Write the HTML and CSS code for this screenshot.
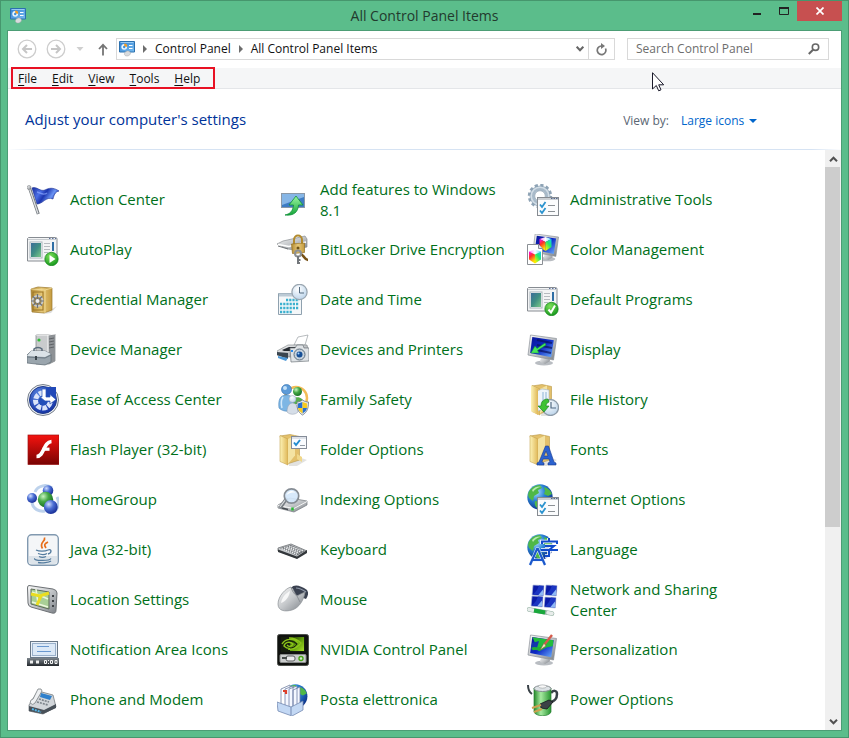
FILE: index.html
```html
<!DOCTYPE html>
<html lang="en">
<head>
<meta charset="utf-8">
<title>All Control Panel Items</title>
<link rel="stylesheet" href="styles.css">
</head>
<body>
<svg class="defs" width="0" height="0" aria-hidden="true">
<defs>
<linearGradient id="flag" x2="1" y2=".4"><stop offset="0" stop-color="#1b2f9c"/><stop offset=".35" stop-color="#4a6ee6"/><stop offset=".55" stop-color="#1c36b0"/><stop offset=".8" stop-color="#6b94f4"/><stop offset="1" stop-color="#2443b8"/></linearGradient>
<linearGradient id="metal" x2="1" y2="1"><stop offset="0" stop-color="#fafafa"/><stop offset=".5" stop-color="#c4c7ca"/><stop offset="1" stop-color="#7b8086"/></linearGradient>
<linearGradient id="dark" x2="0" y2="1"><stop offset="0" stop-color="#7d858c"/><stop offset="1" stop-color="#25292e"/></linearGradient>
<linearGradient id="gold" x2="1"><stop offset="0" stop-color="#b48c35"/><stop offset=".5" stop-color="#e6c878"/><stop offset="1" stop-color="#c59b3f"/></linearGradient>
<linearGradient id="paper" x2="1"><stop offset="0" stop-color="#fdf3b6"/><stop offset="1" stop-color="#dfb757"/></linearGradient>
<linearGradient id="screen" x2="1" y2="1"><stop offset="0" stop-color="#0a1697"/><stop offset=".5" stop-color="#0c28c4"/><stop offset="1" stop-color="#6fb4ff"/></linearGradient>
<linearGradient id="photo" x2="1" y2="1"><stop offset="0" stop-color="#3b6c99"/><stop offset=".5" stop-color="#3f8e83"/><stop offset="1" stop-color="#7cc988"/></linearGradient>
<linearGradient id="panel" x2="1" y2="1"><stop offset="0" stop-color="#2f7fd2"/><stop offset="1" stop-color="#79bdf0"/></linearGradient>
<linearGradient id="red" x2="0" y2="1"><stop offset="0" stop-color="#f5130f"/><stop offset="1" stop-color="#780303"/></linearGradient>
<linearGradient id="battery" x2="1"><stop offset="0" stop-color="#268a2b"/><stop offset=".4" stop-color="#a7eaa0"/><stop offset="1" stop-color="#279430"/></linearGradient>
<linearGradient id="warm" x2=".4" y2="1"><stop offset="0" stop-color="#f0f"/><stop offset=".45" stop-color="#ff3028"/><stop offset="1" stop-color="#ffe600"/></linearGradient>
<linearGradient id="cool" x1="1" x2=".3" y2="1"><stop offset="0" stop-color="#12c4ff"/><stop offset=".5" stop-color="#23e96b"/><stop offset="1" stop-color="#f2f500"/></linearGradient>
<linearGradient id="lid" x2="1"><stop offset="0" stop-color="#ff7bff"/><stop offset=".5" stop-color="#fff"/><stop offset="1" stop-color="#5fdcff"/></linearGradient>
<linearGradient id="nv" x2="1" y2="1"><stop offset="0" stop-color="#1d2b07"/><stop offset=".5" stop-color="#5f9c0a"/><stop offset="1" stop-color="#a8e02a"/></linearGradient>
<linearGradient id="arrow" x2="0" y2="1"><stop offset="0" stop-color="#9bf7a2"/><stop offset="1" stop-color="#15a539"/></linearGradient>
<radialGradient id="ballBlue" cx=".35" cy=".3" r=".75"><stop offset="0" stop-color="#d0defd"/><stop offset=".45" stop-color="#4b6fd4"/><stop offset="1" stop-color="#142a93"/></radialGradient>
<radialGradient id="ballGreen" cx=".35" cy=".3" r=".75"><stop offset="0" stop-color="#c9f5c0"/><stop offset=".45" stop-color="#45a846"/><stop offset="1" stop-color="#146b20"/></radialGradient>
<radialGradient id="globe" cx=".35" cy=".3" r=".75"><stop offset="0" stop-color="#b5e3ff"/><stop offset=".45" stop-color="#2b84d6"/><stop offset="1" stop-color="#0b2f86"/></radialGradient>
<radialGradient id="badge" cx=".4" cy=".3" r=".75"><stop offset="0" stop-color="#7de05a"/><stop offset="1" stop-color="#12941a"/></radialGradient>
<radialGradient id="glass" cx=".4" cy=".3" r=".8"><stop offset="0" stop-color="#fff"/><stop offset="1" stop-color="#b4cfe8"/></radialGradient>
<radialGradient id="ease" cx=".4" cy=".3" r=".8"><stop offset="0" stop-color="#5a87e0"/><stop offset="1" stop-color="#0d2aa0"/></radialGradient>
<g id="app">
<path d="M1.500 3.500h27a1.500 1.500 0 0 1 1.500 1.500v22H.5V4.500z" fill="#f3f4f5" stroke="#878c92"/>
<path d="M1 5.500h28.500" stroke="#c8ccd0"/><path d="M22 4.500h1.500m1.500 0h1.500m1.500 0H29" stroke="#5b6f9a"/>
<rect x="3" y="8" width="12" height="16" fill="#fff" stroke="#a9b4bb"/><rect x="4" y="9" width="10" height="14" fill="url(#photo)"/>
<path d="M17 9.500h6m-6 3h6m-6 3h6m-6 3h4" stroke="#b6babf"/><path d="M26 8v9" stroke="#2f6ea5" stroke-width="2"/>
</g>
<g id="checks">
<rect x="10.500" y="13.500" width="21" height="18" fill="#fbfcfd" stroke="#868b91"/>
<path d="M11 15h20" stroke="#ccd0d4" stroke-width="2"/><path d="M24 14.500h1.500m1 0H28m1 0h1.500" stroke="#56698c"/>
<path d="M13 20.500l2 2.500 3.500-5M13 26.500l2 2.500 3.500-5" fill="none" stroke="#2b93cf" stroke-width="1.800"/><path d="M21 21.500h7m-7 6h7" stroke="#8b9095"/>
</g>
<g id="folder">
<path d="M13 20l17 6-10 6h-8z" fill="#d5d5d3" opacity=".7"/>
<path d="M3 2l10-1.500 9.500 2V26L10 30z" fill="#e3c06b" stroke="#b99741" stroke-width=".6"/>
<path d="M3 1.500L11 5v26l-8-3.500z" fill="url(#paper)" stroke="#c6a550" stroke-width=".6"/>
<path d="M11 5l7-3.500v20L11 30z" fill="#f4e3a2"/>
</g>
<g id="monitor">
<ellipse cx="17" cy="29" rx="9" ry="2.500" fill="#b9bdc2"/><path d="M14 23l8-1 1 5-5 3-5-2z" fill="url(#metal)"/>
<path d="M3.500 1l26 3.500-3 21.500L1 21z" fill="url(#metal)" stroke="#8b9198" stroke-width=".7"/>
<path d="M5.300 3l21.500 3.200-2.600 17L3.200 19z" fill="url(#screen)"/>
</g>
<g id="cube">
<path d="M0 2l6-2 6 2-6 3z" fill="url(#lid)"/><path d="M0 2l6 3v9L0 10z" fill="url(#warm)"/><path d="M12 2L6 5v9l6-4z" fill="url(#cool)"/>
</g>
<g id="world">
<circle cx="13" cy="13" r="12.700" fill="url(#globe)"/>
<path d="M3 6c3-4 7-5 10-5l2 3-4 2 1 3-5 3-1 5-4-3C.5 11 1 8 3 6zM17 3c4 1 7 4 8 7l-4 2-4-2 1-3zM8 17l6 1 2 4-4 3c-3-1-5-4-4-8z" fill="#4fb848"/>
<path d="M5 6c3-4 8-4 10-3-4 0-7 2-9 5z" fill="#e0ffd8" opacity=".7"/>
</g>
<g id="clock"><circle cx="23.500" cy="23.500" r="8" fill="url(#glass)" stroke="#8d9ba8" stroke-width="1.300"/><path d="M24 18v6h5" fill="none" stroke="#506a83" stroke-width="1.200"/></g>
<g id="cpanel">
<path d="M.5.5h15v10.500H.5z" fill="url(#panel)" stroke="#2c70ae"/><path d="M1.500 1.500h13" stroke="#a9d8fa" stroke-width=".8"/>
<circle cx="5.200" cy="5.800" r="2.900" fill="#e9f5ff"/><path d="M5.200 5.800V2.600a3 3 0 0 1 3 3.200z" fill="#f19b23"/><circle cx="5.200" cy="6" r="1.200" fill="#3f90d8"/>
<path d="M10 4.500h3.500M10 7.500h3.500" stroke="#fff" stroke-width="1.200"/>
<path d="M6 11.500c1-2 4-2 5-.5 1.500 2-1 4-3 4s-3.500-1.500-2-3.500z" fill="#d9dbdd" stroke="#a0a4a8" stroke-width=".5"/>
</g>
<g id="tile"><path d="M1 0l11 .5-.7 10.500L0 10z" fill="#0a1aa6" stroke="#b6c2dc" stroke-width=".7"/><path d="M1 9.500l4-4.500 2-4.500 4.500.5-.6 9z" fill="#1b35c2"/><path d="M6 10.500l5-6v6z" fill="#8db8f6"/></g>
</defs>
</svg>

<div class="window">
<header class="titlebar">
<svg class="app-icon" width="16" height="16" viewBox="0 0 16 16" aria-hidden="true"><use href="#cpanel"/></svg>
<div class="title">All Control Panel Items</div>
<div class="controls">
<button type="button" class="ctl" aria-label="Minimize"><svg width="10" height="12" viewBox="0 0 10 12"><path d="M1 9h8" stroke="#222" stroke-width="2"/></svg></button>
<button type="button" class="ctl" aria-label="Maximize"><svg width="10" height="12" viewBox="0 0 10 12"><path d="M.5 3v6.500h9V3" fill="none" stroke="#222"/><path d="M0 3h10" stroke="#222" stroke-width="2"/></svg></button>
<button type="button" class="ctl close" aria-label="Close"><svg width="8" height="8" viewBox="0 0 8 8"><path d="M.5.5l7 7m0-7l-7 7" stroke="#fff" stroke-width="1.700"/></svg></button>
</div>
</header>

<div class="client">
<nav class="address-row">
<button type="button" class="nav" aria-label="Back"><svg width="20" height="20" viewBox="0 0 20 20"><circle cx="10" cy="10" r="8.800" fill="none" stroke="#cdcdcd" stroke-width="1.300"/><path d="M15 10H6m4-4l-4 4 4 4" fill="none" stroke="#c6c6c6" stroke-width="2"/></svg></button>
<button type="button" class="nav" aria-label="Forward"><svg width="20" height="20" viewBox="0 0 20 20"><circle cx="10" cy="10" r="8.800" fill="none" stroke="#cdcdcd" stroke-width="1.300"/><path d="M5 10h9m-4-4l4 4-4 4" fill="none" stroke="#c6c6c6" stroke-width="2"/></svg></button>
<button type="button" class="recent" aria-label="Recent locations"><svg width="8" height="4" viewBox="0 0 8 4"><path d="M.5 0h7L4 4z" fill="#cfcfcf"/></svg></button>
<button type="button" class="up" aria-label="Up"><svg width="10" height="13" viewBox="0 0 10 13"><path d="M5 12.500V2M1 6l4-4.200L9 6" fill="none" stroke="#757575" stroke-width="1.800"/></svg></button>
<div class="address">
<svg width="16" height="16" viewBox="0 0 16 16" aria-hidden="true"><use href="#cpanel"/></svg>
<svg class="sep" width="4" height="8" viewBox="0 0 4 8" aria-hidden="true"><path d="M0 0l4 4-4 4z" fill="#6d6d6d"/></svg>
<a href="#">Control Panel</a>
<svg class="sep" width="4" height="8" viewBox="0 0 4 8" aria-hidden="true"><path d="M0 0l4 4-4 4z" fill="#6d6d6d"/></svg>
<a href="#">All Control Panel Items</a>
<button type="button" class="drop" aria-label="Previous locations"><svg width="8" height="6" viewBox="0 0 8 6"><path d="M.7.7L4 4.300 7.300.7" fill="none" stroke="#666" stroke-width="2"/></svg></button>
<button type="button" class="refresh" aria-label="Refresh"><svg width="11" height="13" viewBox="0 0 11 13"><path d="M9.500 5.500A4.300 4.300 0 1 1 5 3" fill="none" stroke="#777" stroke-width="1.700"/><path d="M5 0v6l4-3z" fill="#777"/></svg></button>
</div>
<form class="search">
<input type="search" placeholder="Search Control Panel" aria-label="Search Control Panel">
<button type="button" aria-label="Search"><svg width="12" height="12" viewBox="0 0 12 12"><circle cx="7.500" cy="4.200" r="3.200" fill="none" stroke="#666" stroke-width="1.600"/><path d="M5 6.800L.8 11" stroke="#666" stroke-width="2"/></svg></button>
</form>
</nav>

<div class="menubar">
<ul class="menu">
<li><a href="#"><u>F</u>ile</a></li><li><a href="#"><u>E</u>dit</a></li><li><a href="#"><u>V</u>iew</a></li><li><a href="#"><u>T</u>ools</a></li><li><a href="#"><u>H</u>elp</a></li>
</ul>
</div>

<div class="heading">
<h1>Adjust your computer's settings</h1>
<label for="view">View by:</label>
<span class="pick"><select id="view"><option>Large icons</option><option>Small icons</option><option>Category</option></select><svg width="8" height="4" viewBox="0 0 8 4" aria-hidden="true"><path d="M0 0h8L4 4z" fill="#06c"/></svg></span>
</div>

<div class="body">
<ul class="items">
<li><a href="#"><svg viewBox="0 0 32 32"><path d="M5 4c5-2 8 4 13 2 4-2 8-3 14 1-4 1-5 4-6 8-7-3-10 5-16 5z" fill="url(#flag)" stroke="#142a92" stroke-width=".6"/><path d="M10 8c4 1 6 4 10 1" fill="none" stroke="#8ba8ff" stroke-width="1.300" opacity=".7"/><path d="M2.500 4l8.800 26" stroke="#6f757b" stroke-width="3"/><path d="M2.300 4l8.700 25.500" stroke="#dfe1e4" stroke-width="1.300"/><circle cx="2" cy="3.500" r="2" fill="url(#metal)" stroke="#7d8185" stroke-width=".6"/></svg><span>Action Center</span></a></li>
<li><a href="#"><svg viewBox="0 0 32 32"><rect x="4.500" y="9.500" width="23" height="14" fill="#3d7cc4" stroke="#8b98a6"/><path d="M5 10h22v3L5 21z" fill="#86b6e6"/><path d="M8 31c5-1 8-4 8.500-10H12l7-9 7 9h-4.500C21 28 17 32 8 31z" fill="url(#arrow)" stroke="#12913a" stroke-width=".8"/></svg><span>Add features to Windows 8.1</span></a></li>
<li><a href="#"><svg viewBox="0 0 32 32"><g transform="translate(13 12)"><circle r="8" fill="none" stroke="#a8bac9" stroke-width="5"/><circle r="10.800" fill="none" stroke="#8ea3b5" stroke-width="2.800" stroke-dasharray="3.200 2.450"/><circle r="8.800" fill="none" stroke="#d2dde6" stroke-width="1.600"/><circle r="5.300" fill="#fff" stroke="#7f95a7" stroke-width=".7"/></g><use href="#checks"/></svg><span>Administrative Tools</span></a></li>

<li><a href="#"><svg viewBox="0 0 32 32"><use href="#app"/><circle cx="24.500" cy="25" r="6.700" fill="url(#badge)" stroke="#13851a" stroke-width=".7"/><path d="M22.500 21l6 4-6 4z" fill="#fff"/></svg><span>AutoPlay</span></a></li>
<li><a href="#"><svg viewBox="0 0 32 32"><path d="M0 10l6-3 22-5 2 3v8l-13 3-6-1z" fill="url(#metal)" stroke="#8a8e92" stroke-width=".7"/><path d="M1 10.500l11 2L29 8" fill="none" stroke="#fff" stroke-width="1.500"/><path d="M1 12l10 3" stroke="#6e7276"/><path d="M17 10V6c0-6 8-6 8 0v4" fill="none" stroke="#b28b2f" stroke-width="2"/><path d="M14.500 10l13-1v9.500l-12 1z" fill="url(#gold)" stroke="#94701f" stroke-width=".7"/><circle cx="21" cy="14" r="1.500" fill="#6d5114"/><path d="M23 20c4 0 4 6 8 6" fill="none" stroke="#775115" stroke-width="2.500"/><circle cx="21" cy="19.500" r="3" fill="none" stroke="#8d9195" stroke-width="2"/><path d="M21 22v8m0-4h2.500M21 29h2" stroke="#73777b" stroke-width="2"/></svg><span>BitLocker Drive Encryption</span></a></li>
<li><a href="#"><svg viewBox="0 0 32 32"><use href="#monitor" transform="translate(5 -1) scale(.9)"/><use href="#cube" transform="translate(12.500 3)"/><path d="M.5 10.500h11l4 4v16H.5z" fill="#fff" stroke="#8a8f94"/><path d="M11.500 10.500v4h4" fill="#e0e5e9" stroke="#8a8f94"/><use href="#cube" transform="translate(2 15.500)"/></svg><span>Color Management</span></a></li>

<li><a href="#"><svg viewBox="0 0 32 32"><path d="M20 28l10-6-6 7-8 1z" fill="#ddd"/><path d="M4 5l7-2 14 1v22l-8 3-12-1z" fill="url(#gold)" stroke="#9a772b" stroke-width=".7"/><path d="M4 5l14 1 7-2M18 6v23" stroke="#f4dfa0" stroke-width=".8" fill="none"/><rect x="6" y="8" width="10" height="18" fill="none" stroke="#997323"/><circle cx="10.500" cy="17" r="5" fill="#a98a48" stroke="#c9ccd0" stroke-width="2"/><path d="M10.500 10v14M4 17h13M6 12.500l9 9m0-9l-9 9" stroke="#6d7278" stroke-width="1.200"/><circle cx="10.500" cy="17" r="2" fill="#eee"/></svg><span>Credential Manager</span></a></li>
<li><a href="#"><svg viewBox="0 0 32 32"><path d="M1.500 9.500h23v21h-23z" fill="#f4f7f9" stroke="#8fa1af"/><path d="M2 11h22" stroke="#bccad5" stroke-width="3"/><path d="M9 16h13M3 20h19M3 24h19M3 28h12" stroke="#3bb0cf" stroke-width="2.500" stroke-dasharray="2.200 1"/><circle cx="22.500" cy="8" r="7.600" fill="url(#glass)" stroke="#9ba7b1" stroke-width="1.300"/><path d="M22.500 3v6h4.500" fill="none" stroke="#536a80"/></svg><span>Date and Time</span></a></li>
<li><a href="#"><svg viewBox="0 0 32 32"><use href="#app"/><circle cx="24.500" cy="25" r="6.700" fill="url(#badge)" stroke="#13851a" stroke-width=".7"/><path d="M21.500 25.500l2.500 3 4-7" fill="none" stroke="#fff" stroke-width="2"/></svg><span>Default Programs</span></a></li>

<li><a href="#"><svg viewBox="0 0 32 32"><path d="M9 1l4-1h15v27l-6 3H9z" fill="#c9cbcd" stroke="#797e83" stroke-width=".7"/><path d="M21 1l7-1v27l-6 3z" fill="#8e9296"/><path d="M9 1h12l7-1M21 1v28" fill="none" stroke="#f8f8f8"/><path d="M22 5l5-1m-5 4l5-1m-5 4l5-1m-5 4l5-1" stroke="#5f6367"/><circle cx="12" cy="6" r="1.600" fill="#31ba38"/><path d="M7 18v-3c2-2 6-2 8 0v3" fill="none" stroke="#596b7b" stroke-width="1.500"/><path d="M0 21l4-4h14l6 3v8l-6 3-18-2z" fill="#9aa5ad" stroke="#5f6b74" stroke-width=".7"/><path d="M4 17h14l6 3-6 3-18-1z" fill="#dbe2e7"/><path d="M0 23l18 1 6-3" stroke="#6b7882" fill="none"/><path d="M9 22v4" stroke="#3b444b" stroke-width="2"/></svg><span>Device Manager</span></a></li>
<li><a href="#"><svg viewBox="0 0 32 32"><path d="M17 11l4-8 10-2-3 10z" fill="#fff" stroke="#9a9fa4" stroke-width=".7"/><path d="M0 17l11-6h19l1 4-6 8H12L0 21z" fill="url(#metal)" stroke="#777d82" stroke-width=".6"/><path d="M5 16l7-3h14l-4 4H7z" fill="#252b31"/><path d="M0 18l11 1v6L0 21z" fill="#3b4650"/><path d="M1 22l10 2-2 3-8-3z" fill="#4f99d7"/><path d="M13 14h5l2-3h6l1 3h5v13l-18 1z" fill="#dfe3e6" stroke="#70777d" stroke-width=".7"/><circle cx="22.500" cy="20.500" r="5.500" fill="#c6d2dd" stroke="#60707e"/><circle cx="22.500" cy="20.500" r="3" fill="#164f96"/><circle cx="21.500" cy="19.500" r="1" fill="#a9d5ff"/><path d="M14 17h2" stroke="#288aee" stroke-width="2"/></svg><span>Devices and Printers</span></a></li>
<li><a href="#"><svg viewBox="0 0 32 32"><use href="#monitor"/><path d="M10 6l15 3m-15 2l15 3M10 16l14 3" stroke="#0a135e" stroke-width="2" opacity=".7"/><path d="M18 9l-8 5.500-2-2.500-4 7h8l-1.500-2.500L19 11z" fill="#45e65b" stroke="#159433" stroke-width=".5"/></svg><span>Display</span></a></li>

<li><a href="#"><svg viewBox="0 0 32 32"><circle cx="16" cy="16" r="15.500" fill="#e9edf2" stroke="#777f8b"/><circle cx="16" cy="16" r="13.500" fill="url(#ease)" stroke="#1f3988"/><circle cx="16" cy="16.500" r="7.500" fill="none" stroke="#dbe5fa" stroke-width="5" stroke-dasharray="4.600 1.200" stroke-dashoffset="-2"/><path d="M19 3h10v11H19z" fill="#2149b8"/><circle cx="16" cy="17" r="4.500" fill="#2350b9"/><path d="M15 5h4v8h4v-2.500l6 5-6 4.500v-3h-5l-5-4h2z" fill="#fff" stroke="#2d56b8" stroke-width=".7"/></svg><span>Ease of Access Center</span></a></li>
<li><a href="#"><svg viewBox="0 0 32 32"><circle cx="19" cy="14" r="11" fill="none" stroke="#f3bd57" stroke-width="2.500"/><circle cx="20.500" cy="7.500" r="4.500" fill="url(#ballGreen)"/><path d="M14 20c0-9 13-9 13 0z" fill="#57b04d"/><circle cx="9.500" cy="5.500" r="5" fill="#5c9bd8" stroke="#2d6cae" stroke-width=".6"/><circle cx="8" cy="4" r="2" fill="#c5e2fa"/><path d="M2 24c-1-8 1-13 7.500-13S17 17 16 25c-4 3-10 3-14-1z" fill="#7db6e4" stroke="#4a86bd" stroke-width=".6"/><path d="M6 13c-2 3-2 7-1 11" stroke="#d3e9fa" stroke-width="1.500" fill="none"/><circle cx="15.500" cy="15" r="3.500" fill="url(#glass)" stroke="#97a3b1" stroke-width=".5"/><path d="M10 28c0-12 11-12 11 0-3 3-8 3-11 0z" fill="#d6dee8" stroke="#929fae" stroke-width=".5"/><path d="M20 18c2 0 4-1 5.500-2 2 1.500 4 2 6 2 0 6-1 10-6 13-5-3-5.500-7-5.500-13z" fill="#e8ecef" stroke="#6e7883" stroke-width=".8"/><path d="M25.500 18v6H21v-4.500zm0 6H30c-.5 2.500-2 4-4.500 5.500z" fill="#2870cf"/><path d="M25.500 18l4.700 1.500V24h-4.700zm0 6v5.500C23 28 21.500 26.500 21 24z" fill="#f7cb20"/></svg><span>Family Safety</span></a></li>
<li><a href="#"><svg viewBox="0 0 32 32"><g transform="translate(2 0)"><use href="#folder"/><path d="M8 7l5-2 7 1v17l-11 4z" fill="#eff5fb" stroke="#a5b5c4" stroke-width=".6"/><path d="M14 8v14m3-14v12" stroke="#8db4d6"/><path d="M2 1.500L9 5v26l-7-4z" fill="url(#paper)"/></g><use href="#clock"/><path d="M21 15c-5 0-7 3-7 7h-3l6 6 5-6h-3c0-2 1-3 3-4z" fill="#3fc234" stroke="#16791b" stroke-width=".6"/></svg><span>File History</span></a></li>

<li><a href="#"><svg viewBox="0 0 32 32"><rect x="1" y="1" width="31" height="29.500" fill="url(#red)" stroke="#9b1212" stroke-width=".7"/><path d="M24.500 7.500C16 8 17.500 22.500 9.500 22.500" fill="none" stroke="#fff" stroke-width="3.600"/><path d="M15.500 15.200h7" stroke="#fff" stroke-width="3.200"/></svg><span>Flash Player (32-bit)</span></a></li>
<li><a href="#"><svg viewBox="0 0 32 32"><use href="#folder"/><path d="M20 20l5 3v5l-5-3z" fill="#f0d789"/><rect x="14.500" y="2.500" width="15" height="12" fill="#fafcff" stroke="#858c98"/><path d="M15 4h14" stroke="#c3c8d2"/><path d="M17 8.500l2 2.500 4-5" fill="none" stroke="#218ccf" stroke-width="2"/><path d="M23 11.500h5" stroke="#939ba6"/></svg><span>Folder Options</span></a></li>
<li><a href="#"><svg viewBox="0 0 32 32"><use href="#folder"/><path d="M10 31v-2l2-1 6.500-16h3L27 28l2 1v2h-8v-2l2-1-1-3h-6l-1 3 2 1v2zm7-9h4l-2-5z" fill="#2b62cf" stroke="#18398d" stroke-width=".6" fill-rule="evenodd"/></svg><span>Fonts</span></a></li>

<li><a href="#"><svg viewBox="0 0 32 32"><path d="M8 8c3-7 12-8 17-4M30 13c3 6 1 12-3 15M5 19c1 6 7 9 13 8" fill="none" stroke="#bdd2ec" stroke-width="3"/><circle cx="21" cy="6.500" r="5.300" fill="url(#ballBlue)"/><circle cx="5" cy="14" r="5" fill="url(#ballBlue)"/><circle cx="18.500" cy="15.500" r="7.700" fill="url(#ballGreen)"/><circle cx="23.800" cy="23" r="6.900" fill="url(#ballBlue)"/></svg><span>HomeGroup</span></a></li>
<li><a href="#"><svg viewBox="0 0 32 32"><path d="M1 21l12-7 17 3v4L17 28 1 24z" fill="url(#metal)" stroke="#71777c" stroke-width=".7"/><path d="M1 21.500l16 3 13-7" fill="none" stroke="#f7f7f7"/><path d="M5 24l6 1.500" stroke="#454a4f" stroke-width="1.500"/><path d="M15.500 23.500v3" stroke="#28ba32" stroke-width="2.500"/><path d="M10 14L3 24" stroke="#777d83" stroke-width="3.500"/><path d="M9 15l-6 8" stroke="#dadddf" stroke-width="1.200"/><circle cx="14.500" cy="12" r="7.200" fill="#d3e7fb" fill-opacity=".9" stroke="#858c94" stroke-width="1.700"/><path d="M9.500 11c2-5 7-5 9-2-4-1-6 0-9 2z" fill="#fff"/></svg><span>Indexing Options</span></a></li>
<li><a href="#"><svg viewBox="0 0 32 32"><use href="#world"/><use href="#checks"/></svg><span>Internet Options</span></a></li>

<li><a href="#"><svg viewBox="0 0 32 32"><rect x=".7" y=".7" width="30.600" height="30.600" rx="4" fill="#f4f6f8" stroke="#8199b0" stroke-width="1.400"/><path d="M2 22h28v5a3 3 0 0 1-3 3H5a3 3 0 0 1-3-3z" fill="#dde4ea"/><path d="M17.500 3.500c1.500 4-6 5-2 11M21 8c-4 2-4 3-2 6" fill="none" stroke="#e76f1c" stroke-width="1.700"/><path d="M9 16c3 1.500 9 1.500 12 0m0 0c4-1.500 4 3 0 4M11 19.500c3 1.200 7 1.200 9 0M12 22.500c2 1 5 1 7 0M8 24.500c-3 2 14 3 16 0M11 28.500c4 1 11 0 13-1.500" fill="none" stroke="#537b9e" stroke-width="1.300"/></svg><span>Java (32-bit)</span></a></li>
<li><a href="#"><svg viewBox="0 0 32 32"><path d="M1 14l13-4 16 7-10 7L1 17z" fill="#c5c8cb" stroke="#6d7175" stroke-width=".8"/><path d="M1 15.500l19 7 10-6.500v3l-10 6L1 18z" fill="#33373b"/><path d="M3 14.300l10.500-3.300L28 17l-8 4.500z" fill="#6a6e72"/><path d="M4.500 14.500L20 20.300M7 13.600l15 5.600M9.500 12.800l14.500 5.300M12 12l14 5" stroke="#eceef0" stroke-width="1.300" stroke-dasharray="1.600 .6"/></svg><span>Keyboard</span></a></li>
<li><a href="#"><svg viewBox="0 0 32 32"><use href="#world"/><path d="M3 31l7-16h1l7 16M5 26h10" fill="none" stroke="#e6f1ff" stroke-width="3.200"/><path d="M3 31l7-16h1l7 16M5 26h10" fill="none" stroke="#1b58cc" stroke-width="2.200"/><path d="M22 4v3M15 10V7.500h15V10M18 12h9l-5 4v6h-4M14 16h17" fill="none" stroke="#fff" stroke-width="3.600"/><path d="M22 4v3M15 10V7.500h15V10M18 12h9l-5 4v6h-4M14 16h17" fill="none" stroke="#104bcb" stroke-width="2"/></svg><span>Language</span></a></li>

<li><a href="#"><svg viewBox="0 0 32 32"><path d="M2 1.500L26 5q4 1 4 4l-1 17q0 4-4 3L4 23q-3-1-3-4L.5 4Q.5 1.500 2 1.500z" fill="url(#metal)" stroke="#6d7175"/><path d="M4 5l18 3v17L4 20z" fill="#a9cf96" stroke="#5d6b58"/><path d="M5 8l16 7M9 5l2 15m-6-2l16 5" stroke="#edf7dd" stroke-width="1.500"/><path d="M4 10l9 2 9-3M14 12l-4 9" fill="none" stroke="#eadd20" stroke-width="3"/><path d="M26 11v2m0 3v2m0 3v2" stroke="#3e4246" stroke-width="2"/></svg><span>Location Settings</span></a></li>
<li><a href="#"><svg viewBox="0 0 32 32"><path d="M14 4c3-4 9-3 16 2 2 3 1 6-1 9L16 10z" fill="#3a4150"/><path d="M19 4c4 0 7 2 10 4" fill="none" stroke="#8f98a8" stroke-width="1.200"/><path d="M1 20C1 12 9 4 14 3c3 2 3 6 6 9 3-2 6-3 8-4-1 8-6 16-13 18S1 27 1 20z" fill="url(#metal)" stroke="#8b9095" stroke-width=".7"/><path d="M14 3c1 4 3 7 6 9l3 6" fill="none" stroke="#8a8f94"/><path d="M4 19c1-6 5-10 9-12-1 6-4 10-9 12z" fill="#fff" opacity=".8"/></svg><span>Mouse</span></a></li>
<li><a href="#"><svg viewBox="0 0 32 32"><use href="#tile" x="5" y="1"/><use href="#tile" x="18" y="1"/><use href="#tile" x="4" y="12"/><use href="#tile" x="17" y="13"/><path d="M2 25.500l23 4" stroke="#8fae9f" stroke-width="4.500" stroke-linecap="round"/><path d="M2 25.500l4 .7m15 2.600l4 .7" stroke="#e7ecea" stroke-width="3.500" stroke-linecap="round"/><path d="M7 26.500l11 2" stroke="#19a83c" stroke-width="4"/></svg><span>Network and Sharing Center</span></a></li>

<li><a href="#"><svg viewBox="0 0 32 32"><rect x="3.500" y="7.500" width="27" height="16" fill="#eaf1f9" stroke="#687787"/><rect x="5.500" y="9.500" width="23" height="12" fill="#dce9f7" stroke="#99b0ca"/><path d="M10 12.500h12m-12 5h14" stroke="#6a98cf"/><path d="M0 24h32v8H0z" fill="url(#dark)"/><path d="M3 28h3m3 0h3" stroke="#eee" stroke-width="3"/><path d="M17.500 26.500h2v3h-2zm6 0h2v3h-2zm4.500 0h2v3h-2z" fill="none" stroke="#f4f4f4"/><path d="M21.500 26v1m0 2v1" stroke="#f4f4f4"/></svg><span>Notification Area Icons</span></a></li>
<li><a href="#"><svg viewBox="0 0 32 32"><rect x=".5" y=".5" width="31" height="31" rx="2" fill="#10120f" stroke="#4d504c"/><rect x="4" y="3" width="24" height="15" fill="#151d0d"/><path d="M13 3h14v14H13z" fill="url(#nv)"/><path d="M5 10c3-5 11-7 16-1-4 6-10 7-14 3 1-4 6-5 9-2-2 3-4 3-6 1M12 4c5 0 9 2 12 5-4 5-8 7-13 6" fill="none" stroke="#8bc51a" stroke-width="1.400"/><path d="M13 7c3 0 5 1 7 3-2 3-4 4-7 4" fill="none" stroke="#16210a" stroke-width="1.200"/><rect x="3" y="20.500" width="26" height="8" rx="1" fill="#cacccc" stroke="#898c8b"/><rect x="9" y="22" width="9" height="5" rx="2" fill="#eee" stroke="#5c5f60"/><path d="M5 24h5" stroke="#464b4a" stroke-width="2"/><circle cx="24" cy="24.500" r="2" fill="#d9ead4" stroke="#4aa817" stroke-width="1.400"/></svg><span>NVIDIA Control Panel</span></a></li>
<li><a href="#"><svg viewBox="0 0 32 32"><use href="#monitor"/><path d="M5.500 3.200L26.500 6.300l-.8 6c-9 1-10 4-14 5z" fill="#22bd3b"/><path d="M5 9l7-2-2 7-6 2z" fill="#1235ad"/><path d="M5 15c4-2 6 2 12-2" fill="none" stroke="#1fae37" stroke-width="3"/><path d="M25 1l-8 10" stroke="#d55b4b" stroke-width="2.400"/><path d="M17 9l-4 7 6-4z" fill="#f3e3bd" stroke="#7d5c37" stroke-width=".6"/></svg><span>Personalization</span></a></li>

<li><a href="#"><svg viewBox="0 0 32 32"><path d="M2 21l9-14 15 4 3 12-13 7L2 27z" fill="#d2d6da" stroke="#656b70" stroke-width=".7"/><path d="M2 22l15 4 12-6v4l-13 6L2 27z" fill="#495159"/><path d="M14 9l11 3-2 4-10-3z" fill="#2f80cc"/><path d="M12 15l10 3m-12 0l11 3" stroke="#7d848b" stroke-width="1.600" stroke-dasharray="2 1"/><path d="M11 5q4-1 4 2L8 19q-2 3-5 0l1-3 2-1 3-6z" fill="#eef0f2" stroke="#777d82" stroke-width=".8"/><path d="M5 25l9 3" stroke="#54b7eb" stroke-width="2" stroke-dasharray="2 1"/></svg><span>Phone and Modem</span></a></li>
<li><a href="#"><svg viewBox="0 0 32 32"><g transform="translate(6 0)"><use href="#world" transform="scale(.95)"/></g><path d="M4 5l9-4v20l-9 2z" fill="#fff" stroke="#8b98b4"/><path d="M8 5l8-3v21l-8 1zM12 5l8-3v21l-8 1zM16 6l7-3v19l-7 2z" fill="#f4f7ff" stroke="#6f7fa6" stroke-width=".8"/><path d="M6 7h3v3" stroke="#dd3f29" stroke-width="2.200" fill="none"/><path d="M0 18l14 5 12-6v9l-11 6L1 27z" fill="#c3d8f4" stroke="#7489b1" stroke-width=".8"/><path d="M14 23v8" stroke="#7489b1"/></svg><span>Posta elettronica</span></a></li>
<li><a href="#"><svg viewBox="0 0 32 32"><path d="M24 9c2-3 6-3 6 1s-2 8-8 8" fill="none" stroke="#394147" stroke-width="2.500"/><path d="M7 4h17v24c-2 5-15 5-17 0z" fill="url(#battery)" stroke="#287f35" stroke-width=".7"/><ellipse cx="15.500" cy="4.500" rx="8.500" ry="3" fill="#dce2e5" stroke="#858c90"/><ellipse cx="15.500" cy="2.500" rx="4" ry="1.700" fill="#f7f7f7" stroke="#989da1" stroke-width=".6"/><path d="M1 1c0 5 1 7 4 9" fill="none" stroke="#394147" stroke-width="2"/><path d="M13 20l9-4 4 2-6 7-6-1z" fill="#3c4146" stroke="#15191c" stroke-width=".8"/><path d="M14 21l-9 3m10 1l-8 3" stroke="#cda04f" stroke-width="2"/></svg><span>Power Options</span></a></li>
</ul>
<div class="scrollbar" aria-hidden="true">
<div class="end"><svg width="9" height="6" viewBox="0 0 9 6"><path d="M1 5.200l3.500-3.500L8 5.200" fill="none" stroke="#505050" stroke-width="2"/></svg></div>
<div class="track"><div class="thumb"></div></div>
<div class="end"><svg width="9" height="6" viewBox="0 0 9 6"><path d="M1 .8l3.500 3.500L8 .8" fill="none" stroke="#505050" stroke-width="2"/></svg></div>
</div>
</div>
</div>
<svg class="cursor" width="13" height="20" viewBox="0 0 13 20" aria-hidden="true"><path d="M.5.700v16.300l3.800-3.500 2.400 5.300 2.300-1-2.300-5h5z" fill="#fff" stroke="#1a1a2a"/></svg>
</div>
</body>
</html>
```
FILE: styles.css
```css
* { box-sizing: border-box; }

body {
  margin: 0;
  font: 12px/16px "Open Sans", "Noto Sans", sans-serif;
  color: #111;
}

a { color: inherit; text-decoration: none; }
ul { list-style: none; margin: 0; padding: 0; }
button { border: 0; padding: 0; background: none; font: inherit; }
svg { flex: none; display: block; }
.defs { position: absolute; }

.window {
  position: relative;
  display: flex;
  flex-direction: column;
  min-height: 100vh;
  padding: 0 6px 6px;
  border: 1px solid #46966d;
  background: #5bbd8b;
}

.titlebar {
  display: grid;
  grid-template-columns: 1fr auto 1fr;
  height: 29px;
}
.app-icon { margin: 7px 0 0 3px; }
.title { font-size: 14px; line-height: 29px; color: #223a2e; }
.controls { display: flex; justify-content: flex-end; }
.ctl {
  display: flex;
  align-items: center;
  justify-content: center;
  width: 27px;
  height: 20px;
}
.close { width: 45px; background: #c75050; }

.client {
  flex: 1;
  display: flex;
  flex-direction: column;
  border: 1px solid #4c9d75;
  background: #fff;
}

.address-row {
  display: flex;
  align-items: center;
  height: 36px;
  margin-bottom: 1px;
  padding: 0 12px 0 9px;
}
.nav { margin-right: 9px; }
.recent { margin-left: 1px; }
.up { margin: 0 8px 0 14px; }
.address {
  flex: 1;
  display: flex;
  align-items: center;
  height: 22px;
  padding-left: 2px;
  border: 1px solid #d9d9d9;
}
.address .sep { margin: 0 8px; }
.drop { margin-left: auto; padding: 0 4px; }
.refresh {
  display: flex;
  align-items: center;
  justify-content: center;
  width: 26px;
  height: 100%;
  border-left: 1px solid #d9d9d9;
}
.search {
  display: flex;
  align-items: center;
  width: 202px;
  height: 22px;
  margin-left: 12px;
  padding: 0 8px;
  border: 1px solid #d9d9d9;
}
.search input {
  flex: 1;
  min-width: 0;
  padding: 0;
  border: 0;
  outline: 0;
  background: none;
  font: inherit;
}
.search input::placeholder { color: #6d6d6d; opacity: 1; }

.menubar {
  display: flex;
  height: 21px;
  padding-left: 3px;
  border-bottom: 1px solid #e4e6e9;
  background: #f5f6f7;
}
.menu {
  display: flex;
  gap: 15px;
  width: 204px;
  height: 22px;
  margin-top: -1px;
  padding: 2px 0 0 5px;
  border: 2px solid #e81123;
}
.menu u { text-underline-offset: 2px; }

.heading {
  display: flex;
  align-items: baseline;
  height: 61px;
  padding: 20px 84px 0 17px;
  border-bottom: 1px solid;
  border-image: linear-gradient(90deg, #fff, #d6e3f3 40px, #d6e3f3 calc(100% - 30px), #fff) 1;
}
h1 {
  flex: 1;
  margin: 0;
  font-size: 15px;
  font-weight: 400;
  line-height: 20px;
  color: #039;
}
.heading label { margin-right: 12px; color: #5a6673; }
.pick { display: flex; align-items: center; gap: 4px; }
.pick select {
  appearance: none;
  padding: 0;
  border: 0;
  background: none;
  font: inherit;
  color: #06c;
}

.body { flex: 1; display: flex; }
.items {
  flex: 1;
  display: grid;
  grid-template-columns: repeat(auto-fill, 250px);
  grid-auto-rows: 50px;
  align-content: start;
  padding: 25px 18px 0 19px;
}
.items a {
  display: flex;
  align-items: center;
  gap: 11px;
  height: 100%;
  padding-right: 16px;
  font-size: 15px;
  line-height: 21px;
  color: #00701a;
}
.items span { padding-bottom: 1px; }
.items svg { width: 32px; height: 32px; }

.scrollbar {
  display: flex;
  flex-direction: column;
  width: 16px;
  background: #f0f0f0;
}
.end {
  display: flex;
  align-items: center;
  justify-content: center;
  height: 17px;
}
.track { flex: 1; }
.thumb { width: 15px; height: 66%; background: #cdcdcd; }

.cursor { position: absolute; left: 651px; top: 71px; }
```
